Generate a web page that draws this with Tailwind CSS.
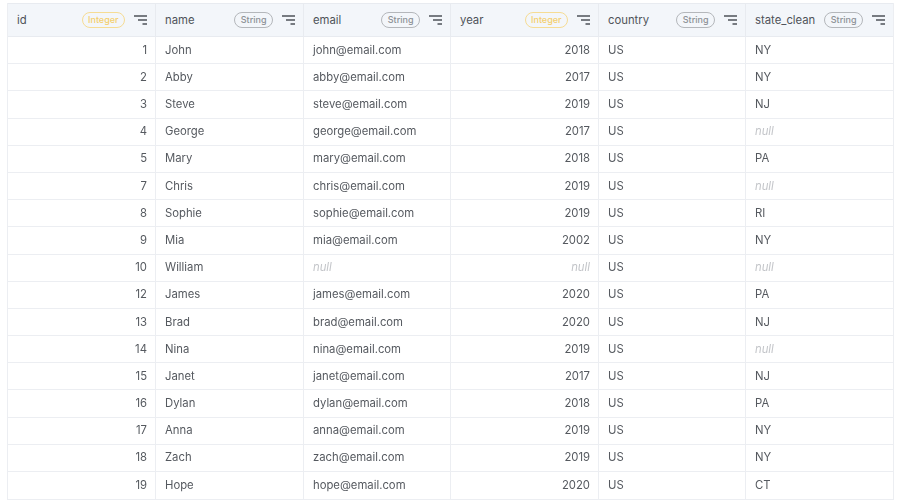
<!DOCTYPE html>
<html lang="en">
  <head>
    <meta charset="UTF-8" />
    <title>Table</title>
    <script src="https://cdn.jsdelivr.net/npm/@tailwindcss/browser@4"></script>
  </head>
  <body class="bg-white font-['Inter',sans-serif] text-[11.3px] text-[#55595f] w-[900px] h-[500px] overflow-hidden">
    <div class="pt-[3px] pl-[7px] blur-[0.35px]">
      <div class="w-[887px] border-l border-r border-b border-[#eceef2]">
        <!-- Header -->
        <div id="header" class="grid grid-cols-[148px_148px_147px_148px_147px_147px] h-[34px] bg-[#f3f6fa] border-t border-b border-[#e8ebf0]"></div>
        <!-- Rows -->
        <div id="rows"></div>
      </div>
    </div>

    <script>
      const columns = [
        { name: "id", type: "Integer" },
        { name: "name", type: "String" },
        { name: "email", type: "String" },
        { name: "year", type: "Integer" },
        { name: "country", type: "String" },
        { name: "state_clean", type: "String" },
      ];

      const people = [
        [1, "John", 2018, "NY"],
        [2, "Abby", 2017, "NY"],
        [3, "Steve", 2019, "NJ"],
        [4, "George", 2017, null],
        [5, "Mary", 2018, "PA"],
        [7, "Chris", 2019, null],
        [8, "Sophie", 2019, "RI"],
        [9, "Mia", 2002, "NY"],
        [10, "William", null, null],
        [12, "James", 2020, "PA"],
        [13, "Brad", 2020, "NJ"],
        [14, "Nina", 2019, null],
        [15, "Janet", 2017, "NJ"],
        [16, "Dylan", 2018, "PA"],
        [17, "Anna", 2019, "NY"],
        [18, "Zach", 2019, "NY"],
        [19, "Hope", 2020, "CT"],
      ];

      const sortIcon =
        '<svg class="w-[13px] h-[10px] shrink-0" viewBox="0 0 13 10"><path d="M0 1h13M4 5h9M8.500 9H13" stroke="#4f5359" stroke-width="1.4" fill="none"/></svg>';

      document.getElementById("header").innerHTML = columns
        .map((col, i) => {
          const badge =
            col.type === "Integer"
              ? "border-[#f6dc94] text-[#f3cf6d]"
              : "border-[#b4b7bb] text-[#8d9196]";
          const divider = i < 5 ? "border-r border-[#e8ebf0]" : "";
          return `<div class="flex items-center pl-[9px] pr-[8px] ${divider}">
            <span class="grow text-[#4f5359]">${col.name}</span>
            <span class="h-[16px] px-[5.5px] mr-[9px] flex items-center rounded-full border text-[9px] font-medium ${badge}">${col.type}</span>
            ${sortIcon}
          </div>`;
        })
        .join("");

      function cell(value, right, last) {
        const align = right ? "justify-end pr-[8px]" : "pl-[9px]";
        const divider = last ? "" : "border-r border-[#eceef2]";
        const content =
          value === null
            ? '<span class="italic text-[#c3c5c9]">null</span>'
            : value;
        return `<div class="flex items-center ${align} ${divider}">${content}</div>`;
      }

      document.getElementById("rows").innerHTML = people
        .map((p, i) => {
          const email = p[2] === null ? null : p[1].toLowerCase() + "@email.com";
          const border = i < people.length - 1 ? "border-b border-[#eceef2]" : "";
          return `<div class="grid grid-cols-[148px_148px_147px_148px_147px_147px] h-[27.19px] ${border}">
            ${cell(p[0], true)}${cell(p[1])}${cell(email)}${cell(p[2], true)}${cell("US")}${cell(p[3], false, true)}
          </div>`;
        })
        .join("");
    </script>
  </body>
</html>
